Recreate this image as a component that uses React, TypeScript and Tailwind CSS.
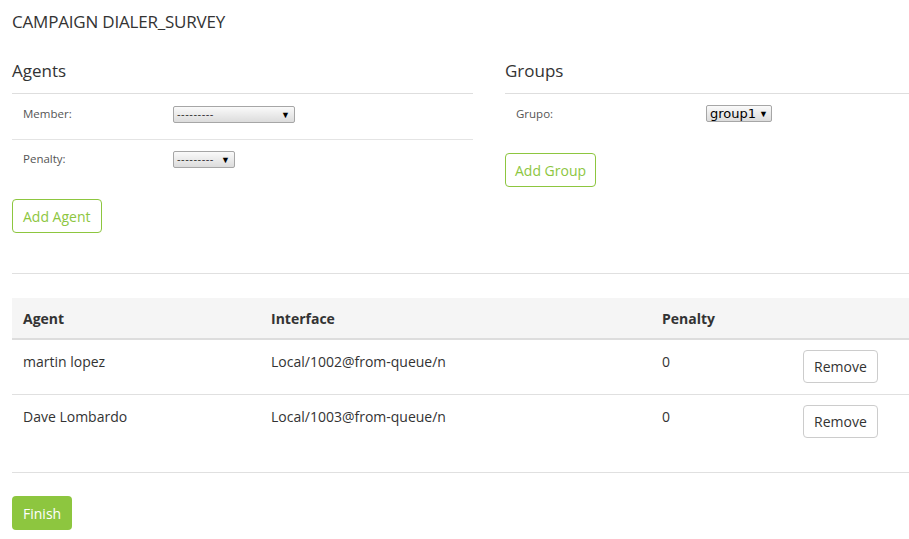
import React from 'react';

const font = { fontFamily: '"Open Sans", "Noto Sans", sans-serif' };

function FakeSelect({ label, width }: { label: string; width: string }) {
  return (
    <div
      className={`flex items-center justify-between ${width} h-[17px] border border-[#a6a6a6] rounded-[2px] bg-gradient-to-b from-[#fafafa] to-[#dcdcdc] pl-[3px] pr-[4px]`}
    >
      <span className="text-[10px] leading-none text-[#333] tracking-[0.5px]" style={{ fontFamily: '"DejaVu Sans", sans-serif' }}>
        {label}
      </span>
      <span className="text-[9px] leading-none text-black">▼</span>
    </div>
  );
}

const agents = [
  { name: 'martin lopez', iface: 'Local/1002@from-queue/n', penalty: '0' },
  { name: 'Dave Lombardo', iface: 'Local/1003@from-queue/n', penalty: '0' },
];

export default function App() {
  return (
    <div className="min-h-[539px] bg-white text-[#333] pl-3 overflow-hidden" style={font}>
      <h1 className="text-[17px] pt-[10px] leading-[24px] tracking-[-0.2px]">CAMPAIGN DIALER_SURVEY</h1>

      <div className="flex gap-8 mt-[26px]">
        {/* agents */}
        <div className="w-[461px] shrink-0">
          <h2 className="text-[17px] leading-[22px]">Agents</h2>
          <div className="mt-[11px] border-t border-[#dedede]">
            <div className="flex items-start h-[46px] border-b border-[#e4e4e4] pl-[11px] pt-[12px]">
              <span className="w-[150px] text-[11.5px] leading-[15px] text-[#555]">Member:</span>
              <FakeSelect label="---------" width="w-[122px]" />
            </div>
            <div className="flex items-start h-[38px] pl-[11px] pt-[11px]">
              <span className="w-[150px] text-[11.5px] leading-[15px] text-[#555]">Penalty:</span>
              <FakeSelect label="---------" width="w-[62px]" />
            </div>
          </div>
          <button className="mt-[21px] h-[34px] px-[10px] border border-[#8dc63f] rounded-[4px] text-[14px] text-[#8dc63f]">
            Add Agent
          </button>
        </div>

        {/* groups */}
        <div className="flex-1 min-w-[404px]">
          <h2 className="text-[17px] leading-[22px]">Groups</h2>
          <div className="mt-[11px] border-t border-[#dedede]">
            <div className="flex items-start h-[40px] pl-[11px] pt-[11px]">
              <span className="w-[190px] text-[11.5px] leading-[15px] text-[#555] pt-[1px]">Grupo:</span>
              <div className="flex items-center gap-[3px] h-[17px] border border-[#a6a6a6] rounded-[2px] bg-gradient-to-b from-[#fafafa] to-[#dcdcdc] pl-[3px] pr-[3px]">
                <span className="text-[13px] leading-none text-black" style={{ fontFamily: '"DejaVu Sans", sans-serif' }}>
                  group1
                </span>
                <span className="text-[9px] leading-none text-black">▼</span>
              </div>
            </div>
          </div>
          <button className="mt-[19px] h-[34px] px-[9px] border border-[#8dc63f] rounded-[4px] text-[14px] text-[#8dc63f]">
            Add Group
          </button>
        </div>
      </div>

      <div className="mt-[40px] border-t border-[#e0e0e0]" />

      <table className="mt-[24px] w-full border-collapse text-[14px]">
        <thead>
          <tr className="bg-[#f5f5f5] border-b-2 border-[#dddddd] h-[41px]">
            <th className="w-[248px] text-left font-bold pl-[11px]">Agent</th>
            <th className="w-[391px] text-left font-bold pl-[11px]">Interface</th>
            <th className="w-[141px] text-left font-bold pl-[11px]">Penalty</th>
            <th />
          </tr>
        </thead>
        <tbody>
          {agents.map((a, i) => (
            <tr key={a.name} className={i < agents.length - 1 ? 'border-b border-[#e0e0e0]' : ''}>
              <td className="align-top pl-[11px] pt-[11px] pb-[11px]">{a.name}</td>
              <td className="align-top pl-[11px] pt-[11px]">{a.iface}</td>
              <td className="align-top pl-[11px] pt-[11px]">{a.penalty}</td>
              <td className="align-top pl-[11px] pt-[10px] pb-[11px]">
                <button className="h-[33px] px-[10px] border border-[#cccccc] rounded-[4px] bg-white text-[14px] text-[#333]">
                  Remove
                </button>
              </td>
            </tr>
          ))}
        </tbody>
      </table>

      <div className="mt-[23px] border-t border-[#e0e0e0]" />

      <button className="mt-[23px] h-[34px] px-[11px] rounded-[4px] bg-[#8dc63f] text-[14px] text-white">
        Finish
      </button>
    </div>
  );
}
